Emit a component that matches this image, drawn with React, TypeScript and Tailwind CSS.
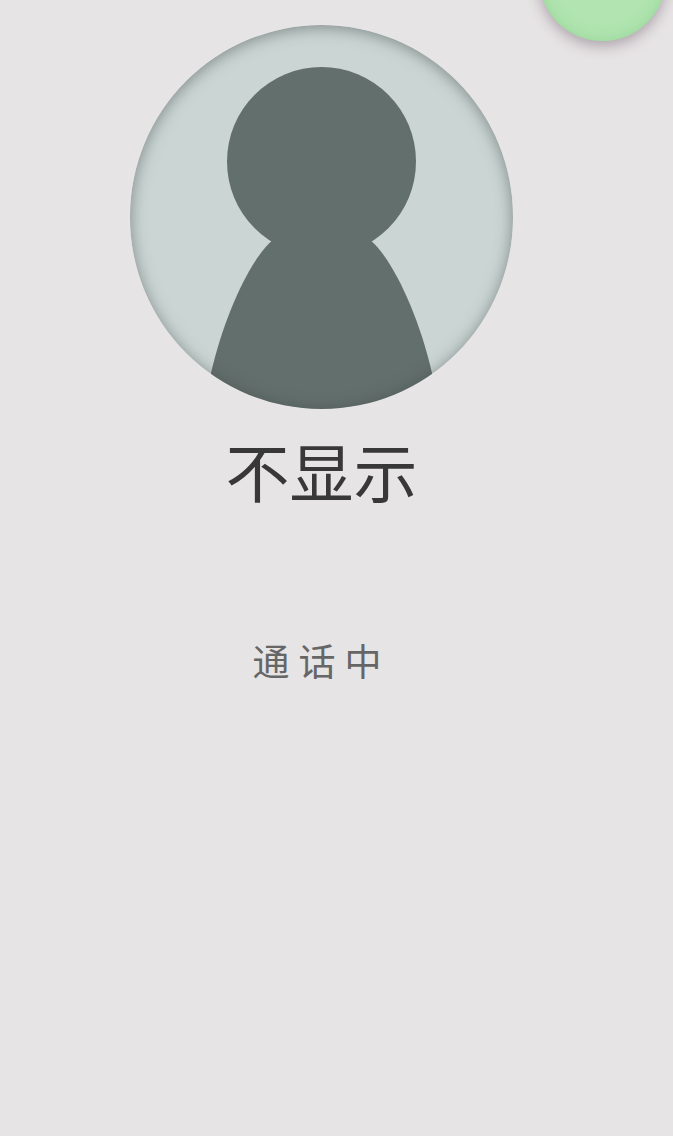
export default function App() {
  return (
    <div className="relative h-[1136px] w-[673px] overflow-hidden bg-[#e7e4e5] font-['Noto_Sans_CJK_SC','Noto_Sans',sans-serif]">
      {/* floating green button, mostly off screen */}
      <div className="absolute left-[539px] top-[-86px] h-[127px] w-[127px] rounded-full bg-[#b1e4b0] shadow-[0_5px_14px_rgba(80,60,80,0.38),inset_0_0_14px_rgba(120,200,125,0.45)]" />

      <div className="flex w-[643px] flex-col items-center pt-[25px]">
        <div className="relative h-[384px] w-[383px] overflow-hidden rounded-full bg-[#cbd6d4]">
          <svg viewBox="0 0 383 384" className="h-full w-full">
            <circle cx="191.5" cy="136.5" r="94.5" fill="#636f6c" />
            <path d="M141.7 216 C 120 235 94 291 81 348 L 81 384 L 302 384 L 302 348 C 289 291 263 235 241.3 216 Z" fill="#636f6c" />
          </svg>
          <div className="absolute inset-0 rounded-full shadow-[inset_0_2px_16px_rgba(60,70,70,0.55)]" />
        </div>
        <div className="mt-[15px] text-[64px] leading-[90px] font-normal text-[#383838]">不显示</div>
        <div className="mt-[118px] text-[37px] leading-[56px] font-normal tracking-[9px] text-[#666666]">通话中</div>
      </div>
    </div>
  );
}
